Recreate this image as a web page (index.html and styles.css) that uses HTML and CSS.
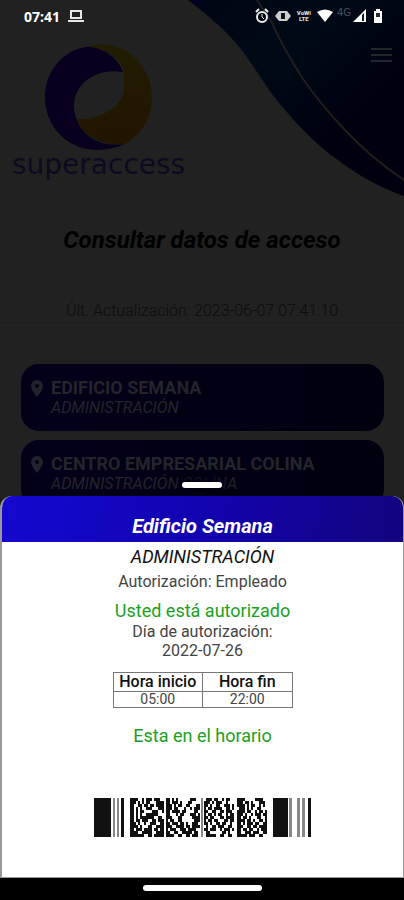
FILE: index.html
```html
<!DOCTYPE html>
<html lang="es">
<head>
<meta charset="utf-8">
<meta name="viewport" content="width=device-width, initial-scale=1">
<title>Superaccess</title>
<link rel="stylesheet" href="styles.css">
</head>
<body>
<div class="app">
  <svg class="swoosh" viewBox="0 0 216 200" aria-hidden="true">
    <defs>
      <linearGradient id="wave" x1="0" y1="0" x2="1" y2="1">
        <stop offset="0" stop-color="#000513"/>
        <stop offset=".35" stop-color="#000a17"/>
        <stop offset=".7" stop-color="#00000f"/>
        <stop offset="1" stop-color="#000010"/>
      </linearGradient>
    </defs>
    <path fill="url(#wave)" d="M0 0C18 14 34 27 47 42C60 57 70 74 81 90C95 109 121 139 147 158C170 175 192 188 216 196V0Z"/>
    <path fill="#000024" d="M2 0h13l-5 7z"/>
    <path fill="none" stroke="#211d1b" stroke-width="2" d="M69 0C75 10 80 16 84 23C92 41 104 62 115 79C134 106 171 151 216 180"/>
  </svg>

  <div class="status">
    <span class="clock">07:41</span>
    <svg class="laptop" viewBox="0 0 16 14" aria-hidden="true"><path fill="none" stroke="#e8e8e8" stroke-width="2" d="M3 2h10v7H3zM0 12h16"/></svg>
    <span class="signals">
      <svg width="14" height="16" viewBox="0 0 14 16" aria-hidden="true"><g fill="none" stroke="#eee" stroke-width="2"><circle cx="7" cy="9" r="5"/><path d="M1 4l3-3M13 4l-3-3"/><path stroke-width="1" d="M7 6v3l2 2"/></g></svg>
      <svg width="16" height="16" viewBox="0 0 16 16" aria-hidden="true"><path fill="#ccc" d="M4 3h8v10H4zM4 3v10L0 8zM12 3v10l4-5z"/><path fill="#06111c" d="M6 5h4v6H6z"/></svg>
      <span class="volte">VoWi<br>LTE</span>
      <svg width="16" height="14" viewBox="0 0 16 14" aria-hidden="true"><path fill="#fff" d="M0 3Q8-2 16 3L8 13z"/></svg>
      <span class="net">4G</span>
      <svg width="13" height="14" viewBox="0 0 13 14" aria-hidden="true"><path fill="#fff" d="M0 13L13 0v13z"/><path fill="#111a26" d="M9 6l2-2v8H9z"/></svg>
      <svg class="battery" width="10" height="14" viewBox="0 0 10 14" aria-hidden="true"><path fill="#fff" d="M3 0h4v2h2v12H1V2h2z"/><path fill="#222a35" d="M3 4h4v4H3z"/></svg>
    </span>
  </div>

  <header class="header">
    <div class="brand">
      <svg class="logo" viewBox="0 0 108 108" aria-hidden="true">
        <defs>
          <linearGradient id="gold" x1="0" y1="0" x2="0" y2="1">
            <stop offset="0" stop-color="#211d00"/>
            <stop offset=".5" stop-color="#221800"/>
            <stop offset="1" stop-color="#221500"/>
          </linearGradient>
        </defs>
        <path fill="url(#gold)" d="M40 4C76-8 107 21 107 54C107 78 94 93 80 101C57 104 38 92 31 76C57 78 78 61 79 47V28C75 15 61 4 40 4Z"/>
        <path fill="#08001e" d="M40 4C57 3 73 14 78 29C49 24 29 43 29 62C29 86 49 106 80 101C66 107 53 108 42 106C17 101 0 80 0 54C0 28 18 8 40 4Z"/>
      </svg>
      <span class="wordmark">superaccess</span>
    </div>
    <button class="menu" aria-label="Menú"><span></span><span></span><span></span></button>
  </header>

  <main>
    <h1>Consultar datos de acceso</h1>
    <p class="updated">Últ. Actualización: 2023-06-07 07:41:10</p>
    <div class="places">
      <a class="place" href="#semana">
        <svg class="pin" viewBox="0 0 12 17" aria-hidden="true"><path fill="#22222a" fill-rule="evenodd" d="M6 0a6 6 0 0 1 6 6c0 4-6 11-6 11S0 10 0 6a6 6 0 0 1 6-6zm0 4a2 2 0 1 0 0 4a2 2 0 0 0 0-4z"/></svg>
        <span><strong>EDIFICIO SEMANA</strong><em>ADMINISTRACIÓN</em></span>
      </a>
      <a class="place" href="#colina">
        <svg class="pin" viewBox="0 0 12 17" aria-hidden="true"><path fill="#22222a" fill-rule="evenodd" d="M6 0a6 6 0 0 1 6 6c0 4-6 11-6 11S0 10 0 6a6 6 0 0 1 6-6zm0 4a2 2 0 1 0 0 4a2 2 0 0 0 0-4z"/></svg>
        <span><strong>CENTRO EMPRESARIAL COLINA</strong><em>ADMINISTRACIÓN COLINA</em></span>
      </a>
    </div>
  </main>

  <div class="overlay">
    <div class="handle"></div>
    <section class="sheet" id="semana">
      <h2>Edificio Semana</h2>
      <div class="details">
        <p class="area">ADMINISTRACIÓN</p>
        <p class="role">Autorización: Empleado</p>
        <p class="ok">Usted está autorizado</p>
        <p class="day">Día de autorización:<br>2022-07-26</p>
        <table>
          <thead><tr><th>Hora inicio</th><th>Hora fin</th></tr></thead>
          <tbody><tr><td>05:00</td><td>22:00</td></tr></tbody>
        </table>
        <p class="ok">Esta en el horario</p>
        <svg class="barcode" viewBox="0 0 217 39" role="img" aria-label="Código de barras">
          <path fill="#111" d="M0 0h17v39H0zM27 0h3v39h-3zM179 0h15v39h-15zM214 0h3v39h-3z"/>
          <path fill="#888" d="M19 0h2v39h-2zM23 0h2v39h-2zM107 0h2v39h-2zM195 0h3v39h-3zM203 0h3v39h-3zM208 0h3v39h-3z"/>
          <path id="modules" fill="#111"/>
        </svg>
      </div>
    </section>
    <div class="navbar"><span></span></div>
  </div>
</div>
<script src="barcode.js"></script>
</body>
</html>
```
FILE: barcode.js
```js
// Each module is 2 units wide and 3 units high; "#" is a dark module.
const blocks = [
  { x: 36, rows: [
    "####..#.###.###..", "###.#.#.##...####", "##..##.##.##.####", "##.#.#..###...###",
    "##.#.##....###..#", "##.#.#..######...", "##.#.#######..##.", "##.##.###..##.###",
    "###.#..#..###..##", "####.#...##..####", "##.###.####.##.##", "####..#####..####",
    "#######..##.#####"] },
  { x: 72, rows: [
    "##.#.#......###..", "##.###.#...##....", "###.#.##..##...##", "###.##...#..#.###",
    "##.####.##....##.", "##...#.##...###.#", "###...##.....####", "#.##..##......###",
    "##.###.##.#..###.", "###..####.##.####", "#.###..###.####..", "##..##..#####.##.",
    "####..##..##.###."] },
  { x: 108, rows: [
    "..###.##..#.##..", ".###.#.###..#...", ".##.#..##..###.#", ".#.##.####..##.#",
    ".##..##..##.###.", ".#.##.#.##..#.##", ".##.##...##.####", ".#.##.##...##.##",
    ".##.#..##.##..#.", "..#..##.###..##.", ".##.###..#.###.#", "..##......##.#..",
    "..#####..##..##."] },
  { x: 143, rows: [
    "####.....####..", "###.##.#...###.", "####.#.##..#.#.", ".###.#.#..##...",
    "####.##..#.##.#", "###.#..#.###.##", "##.##.#...##..#", "####.##.#..##.#",
    "##.#.###.##..##", "###..##.##.####", "##.##.##..#.###", "##..###.###..##",
    "#####.###..##.."] }
];

let d = "";
for (const { x, rows } of blocks) {
  rows.forEach((row, r) => {
    [...row].forEach((cell, c) => {
      if (cell === "#") d += `M${x + c * 2} ${r * 3}h2v3h-2z`;
    });
  });
}
document.getElementById("modules").setAttribute("d", d);
```
FILE: styles.css
```css
* { box-sizing: border-box; }
body { margin: 0; background: #212121; font-family: Roboto, "Liberation Sans", sans-serif; }
h1, h2, p { margin: 0; }
.app { position: relative; min-height: 100vh; overflow: hidden; }
.swoosh { position: absolute; top: 0; right: 0; width: 216px; height: 200px; }

.status { position: relative; display: flex; align-items: center; height: 32px; padding: 0 21px 0 24px; color: #fff; }
.clock { font: 700 14px "Noto Sans", sans-serif; }
.laptop { width: 16px; height: 14px; margin-left: 8px; }
.signals { display: flex; align-items: center; gap: 6px; margin-left: auto; }
.volte { font-size: 6px; line-height: 6px; font-weight: 900; text-align: center; color: #ddd; }
.net { font: 10px/14px "DejaVu Sans", sans-serif; color: #4b535e; margin: -6px -4px 0 -2px; }
.battery { margin-left: 1px; }

.header { position: relative; display: flex; justify-content: space-between; align-items: flex-start; padding: 11px 12px 0; height: 192px; }
.brand { display: flex; flex-direction: column; align-items: center; }
.logo { width: 108px; height: 108px; }
.wordmark { font: 28px/28px "DejaVu Sans", sans-serif; color: #0d0a20; }
.menu { display: flex; flex-direction: column; gap: 4px; width: 21px; margin-top: 5px; padding: 0; border: 0; background: none; }
.menu span { height: 2px; background: #22262b; }

h1 { font-size: 24px; line-height: 32px; font-style: italic; font-weight: 700; text-align: center; color: #000; }
.updated { margin-top: 45px; padding-bottom: 1px; font-size: 16px; line-height: 20px; font-weight: 300; text-align: center; color: #0c0c0c; border-bottom: 1px solid #1c1c1c; }
.places { display: grid; gap: 9px; padding: 41px 20px 0 21px; }
.place { display: flex; align-items: flex-start; gap: 8px; height: 67px; padding: 14px 10px; border-radius: 18px; color: #24242b; text-decoration: none; background: linear-gradient(90deg, #03001a, #020014 60%, #00000e); }
.pin { width: 12px; height: 17px; margin-top: 2px; }
.place strong, .place em { display: block; }
.place strong { font-size: 18px; line-height: 20px; font-weight: 700; }
.place em { font-size: 16px; line-height: 20px; }

.overlay { position: absolute; left: 0; right: 0; bottom: 0; display: flex; flex-direction: column; }
.handle { width: 40px; height: 6px; margin: 0 auto 8px; border-radius: 3px; background: #fff; box-shadow: 0 0 8px 4px #020014; }
.sheet { border: solid #999; border-width: 0 1px 1px 2px; border-radius: 12px 12px 0 0; background: #fff; overflow: hidden; }
h2 { padding: 16px 0 2px; font-size: 20px; line-height: 28px; font-style: italic; font-weight: 700; text-align: center; color: #fff; background: linear-gradient(100deg, #1408d0, #1203b0 50%, #12047c); }
.details { display: flex; flex-direction: column; align-items: center; padding-bottom: 40px; text-align: center; color: #444; }
.area { margin-top: 4px; font-size: 18px; line-height: 22px; font-style: italic; color: #111; }
.role { margin-top: 4px; font-size: 16px; line-height: 20px; }
.ok { margin-top: 9px; font-size: 18px; line-height: 20px; color: #1ba11f; }
.day { margin-top: 1px; font-size: 16px; line-height: 19px; }
table { width: 180px; margin: 12px 0 9px; border-collapse: collapse; font-size: 14px; line-height: 16px; }
th, td { width: 50%; padding: 0; border: 1px solid #777; }
th { font-size: 16px; line-height: 18px; font-weight: 500; color: #111; }
td { line-height: 15px; }
.barcode { width: 217px; height: 39px; margin-top: 52px; }
.navbar { display: flex; justify-content: center; padding: 7px 0 9px; background: #000; }
.navbar span { width: 119px; height: 6px; border-radius: 3px; background: #fff; }
```
